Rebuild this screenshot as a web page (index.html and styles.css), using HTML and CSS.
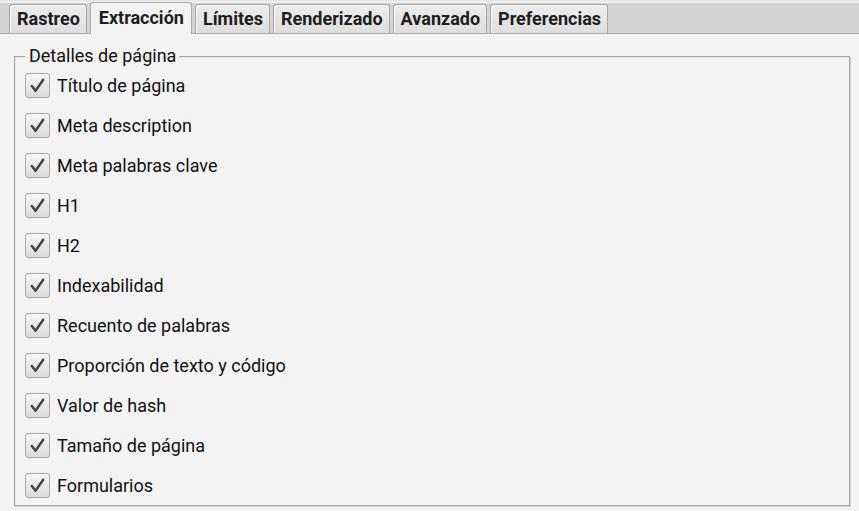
FILE: index.html
```html
<!DOCTYPE html>
<html lang="es">
<head>
<meta charset="utf-8">
<link rel="stylesheet" href="styles.css">
</head>
<body>
<div class="tabbar">
  <div class="tab">Rastreo</div>
  <div class="tab active">Extracción</div>
  <div class="tab">Límites</div>
  <div class="tab">Renderizado</div>
  <div class="tab">Avanzado</div>
  <div class="tab">Preferencias</div>
</div>
<div class="content">
  <fieldset class="group">
    <legend>Detalles de página</legend>
    <div class="row"><span class="cb"><svg viewBox="0 0 24 24"><path d="M5.5 12.5 L9.8 18 L18.5 5.5" /></svg></span>Título de página</div>
    <div class="row"><span class="cb"><svg viewBox="0 0 24 24"><path d="M5.5 12.5 L9.8 18 L18.5 5.5" /></svg></span>Meta description</div>
    <div class="row"><span class="cb"><svg viewBox="0 0 24 24"><path d="M5.5 12.5 L9.8 18 L18.5 5.5" /></svg></span>Meta palabras clave</div>
    <div class="row"><span class="cb"><svg viewBox="0 0 24 24"><path d="M5.5 12.5 L9.8 18 L18.5 5.5" /></svg></span>H1</div>
    <div class="row"><span class="cb"><svg viewBox="0 0 24 24"><path d="M5.5 12.5 L9.8 18 L18.5 5.5" /></svg></span>H2</div>
    <div class="row"><span class="cb"><svg viewBox="0 0 24 24"><path d="M5.5 12.5 L9.8 18 L18.5 5.5" /></svg></span>Indexabilidad</div>
    <div class="row"><span class="cb"><svg viewBox="0 0 24 24"><path d="M5.5 12.5 L9.8 18 L18.5 5.5" /></svg></span>Recuento de palabras</div>
    <div class="row"><span class="cb"><svg viewBox="0 0 24 24"><path d="M5.5 12.5 L9.8 18 L18.5 5.5" /></svg></span>Proporción de texto y código</div>
    <div class="row"><span class="cb"><svg viewBox="0 0 24 24"><path d="M5.5 12.5 L9.8 18 L18.5 5.5" /></svg></span>Valor de hash</div>
    <div class="row"><span class="cb"><svg viewBox="0 0 24 24"><path d="M5.5 12.5 L9.8 18 L18.5 5.5" /></svg></span>Tamaño de página</div>
    <div class="row"><span class="cb"><svg viewBox="0 0 24 24"><path d="M5.5 12.5 L9.8 18 L18.5 5.5" /></svg></span>Formularios</div>
  </fieldset>
</div>
</body>
</html>
```
FILE: styles.css
```css
html, body {
  margin: 0;
  padding: 0;
  background: #f3f3f3;
  width: 859px;
  height: 511px;
  overflow: hidden;
  font-family: Roboto, "Noto Sans", sans-serif;
  color: #111;
}
.tabbar {
  display: flex;
  align-items: flex-end;
  box-sizing: border-box;
  height: 34px;
  padding-left: 9px;
  gap: 3px;
  background: #d4d4d4;
  border-top: 1px solid #e4e4e4;
  border-bottom: 1px solid #a9a9a9;
  box-shadow: inset 0 2px 0 #efefef;
}
.tab {
  height: 29px;
  box-sizing: border-box;
  padding: 0 6px 0 7px;
  border: 1px solid #a7a7a7;
  border-bottom: none;
  border-radius: 3px 3px 0 0;
  background: linear-gradient(#ececec, #dedede);
  box-shadow: inset 1px 1px 0 #f8f8f8;
  font-weight: 700;
  font-size: 18px;
  line-height: 28px;
  color: #1e1e1e;
}
.tab.active {
  height: 32px;
  margin-bottom: -1px;
  padding: 0 7px 0 8px;
  background: #f3f3f3;
  line-height: 30px;
}
.content {
  padding: 12px 9px 0 14px;
}
.group {
  margin: 0;
  padding: 0 0 0 10px;
  height: 460px;
  box-sizing: border-box;
  min-width: 0;
  border: 1px solid #a6a6a6;
  box-shadow: inset 1px 1px 0 #e6e6e6, 1px 1px 0 #d0d0d0;
}
.group legend {
  margin-left: 0;
  margin-bottom: -1px;
  padding: 0 3px 0 4px;
  font-size: 18px;
  line-height: 20px;
  color: #111;
}
.row {
  display: flex;
  align-items: center;
  gap: 7px;
  height: 40px;
  font-size: 18px;
  color: #111;
}
.cb {
  flex: none;
  display: flex;
  align-items: center;
  justify-content: center;
  width: 23px;
  height: 23px;
  border: 1px solid #a9a9a9;
  border-radius: 3px;
  background: linear-gradient(#f6f6f6, #dadada);
}
.cb svg {
  width: 21px;
  height: 21px;
}
.cb path {
  fill: none;
  stroke: #444;
  stroke-width: 2.8;
  stroke-linecap: round;
  stroke-linejoin: round;
}
```
